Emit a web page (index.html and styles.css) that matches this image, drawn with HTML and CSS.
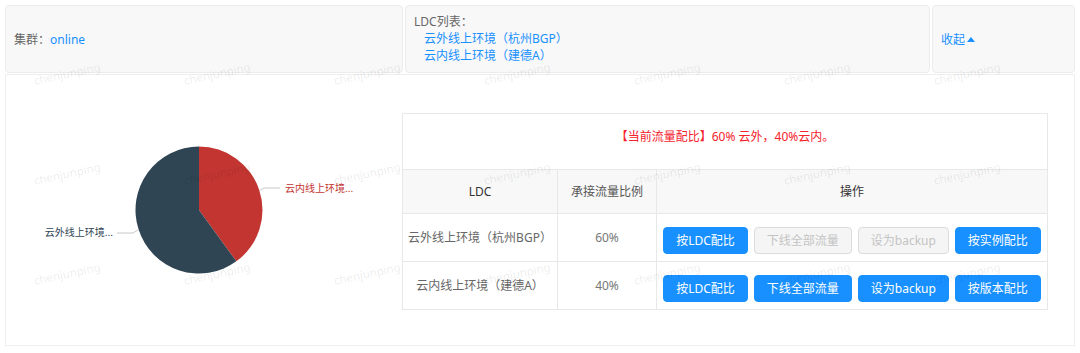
FILE: index.html
```html
<!DOCTYPE html>
<html lang="zh-CN">
<head>
<meta charset="utf-8">
<title>LDC</title>
<link rel="stylesheet" href="styles.css">
</head>
<body>
<div class="page">
  <div class="header">
    <div class="card card-cluster">
      <span class="label">集群：</span><a class="link">online</a>
    </div>
    <div class="card card-ldc">
      <div class="label">LDC列表：</div>
      <div class="ldc-links">
        <a class="link">云外线上环境（杭州BGP）</a>
        <a class="link">云内线上环境（建德A）</a>
      </div>
    </div>
    <div class="card card-toggle">
      <a class="link">收起<span class="tri"></span></a>
    </div>
  </div>

  <div class="panel">
    <div class="chart">
      <svg width="396" height="270" viewBox="0 0 396 270">
        <path d="M193,135 L193,71.5 A63.5,63.5 0 0 1 230.32,186.37 Z" fill="#c23531"/>
        <path d="M193,135 L230.32,186.37 A63.5,63.5 0 1 1 193,71.5 Z" fill="#2f4554"/>
        <polyline points="253.5,115.5 258,113 274,113" fill="none" stroke="#c8c8c8" stroke-width="1"/>
        <polyline points="132.6,154.6 127,158 111,158" fill="none" stroke="#c8c8c8" stroke-width="1"/>
        <text x="279" y="116.5" class="pie-label red">云内线上环境...</text>
        <text x="107" y="161" class="pie-label dark" text-anchor="end">云外线上环境...</text>
      </svg>
    </div>

    <table class="ratio">
      <colgroup>
        <col class="c1"><col class="c2"><col class="c3">
      </colgroup>
      <tr class="title-row">
        <td colspan="3">【当前流量配比】60% 云外，40%云内。</td>
      </tr>
      <tr class="head-row">
        <th class="th-ldc">LDC</th>
        <th class="th-ratio">承接流量比例</th>
        <th>操作</th>
      </tr>
      <tr class="body-row">
        <td>云外线上环境（杭州BGP）</td>
        <td class="pct">60%</td>
        <td>
          <div class="actions">
            <button class="btn">按LDC配比</button>
            <button class="btn disabled">下线全部流量</button>
            <button class="btn disabled">设为backup</button>
            <button class="btn">按实例配比</button>
          </div>
        </td>
      </tr>
      <tr class="body-row">
        <td>云内线上环境（建德A）</td>
        <td class="pct">40%</td>
        <td>
          <div class="actions">
            <button class="btn">按LDC配比</button>
            <button class="btn">下线全部流量</button>
            <button class="btn">设为backup</button>
            <button class="btn">按版本配比</button>
          </div>
        </td>
      </tr>
    </table>
  </div>

  <div class="watermark">
    <span>chenjunping</span><span>chenjunping</span><span>chenjunping</span><span>chenjunping</span><span>chenjunping</span><span>chenjunping</span><span>chenjunping</span>
    <span>chenjunping</span><span>chenjunping</span><span>chenjunping</span><span>chenjunping</span><span>chenjunping</span><span>chenjunping</span><span>chenjunping</span>
    <span>chenjunping</span><span>chenjunping</span><span>chenjunping</span><span>chenjunping</span><span>chenjunping</span><span>chenjunping</span><span>chenjunping</span>
  </div>
</div>
</body>
</html>
```

FILE: styles.css
```css
* { box-sizing: border-box; }

html, body {
  margin: 0;
  padding: 0;
  background: #fff;
}

body {
  font-family: "Noto Sans", "Noto Sans CJK SC", sans-serif;
  font-size: 12px;
  color: #666;
  width: 1080px;
  height: 353px;
  overflow: hidden;
}

.page {
  position: relative;
  padding: 5px 5px 0 5px;
  height: 353px;
  overflow: hidden;
}

.header {
  display: flex;
  gap: 2px;
  height: 68px;
}

.card {
  background: #f8f8f8;
  border: 1px solid #ececec;
  border-radius: 4px;
  padding: 0 8px;
  display: flex;
  align-items: center;
  line-height: 17px;
}

.card-cluster { width: 398px; }
.card-ldc {
  width: 525px;
  flex-direction: column;
  align-items: flex-start;
  justify-content: center;
  padding-bottom: 2px;
}
.card-toggle { flex: 1; }

.label { color: #666; }

.link {
  color: #1890ff;
  text-decoration: none;
}

.ldc-links {
  display: flex;
  flex-direction: column;
  padding-left: 10px;
}

.tri {
  display: inline-block;
  width: 0;
  height: 0;
  border-left: 4px solid transparent;
  border-right: 4px solid transparent;
  border-bottom: 5px solid #1890ff;
  margin-left: 2px;
  vertical-align: 2px;
}

.panel {
  margin-top: 1px;
  height: 272px;
  border: 1px solid #eee;
  background: #fff;
  display: flex;
  align-items: center;
}

.chart {
  width: 396px;
  height: 270px;
  flex: none;
}

.chart svg { display: block; }

.pie-label {
  font-family: "Noto Sans CJK SC", sans-serif;
  font-size: 10px;
}
.pie-label.red { fill: #c23531; }
.pie-label.dark { fill: #2f4554; }

.ratio {
  width: 645px;
  border-collapse: collapse;
  table-layout: fixed;
  border: 1px solid #e8e8e8;
  margin-top: 2px;
}

.ratio col.c1 { width: 155px; }
.ratio col.c2 { width: 99px; }
.ratio col.c3 { width: 391px; }

.ratio td, .ratio th {
  border: 1px solid #e8e8e8;
  text-align: center;
  vertical-align: middle;
  padding: 0;
  font-size: 12px;
  line-height: 17px;
}

.title-row td {
  height: 56px;
  color: #f5222d;
  padding-bottom: 10px;
  background: #fff;
}

.head-row th {
  height: 44px;
  background: #f8f8f8;
  font-weight: normal;
  color: #333;
}

.head-row .th-ratio { color: #555; }

.body-row td {
  height: 48px;
  color: #666;
}

.body-row td.pct { color: #777; }

.actions {
  display: flex;
  justify-content: center;
  gap: 6px;
  padding-top: 7px;
}

.btn {
  height: 27px;
  padding: 0 12px;
  font-family: "Noto Sans", "Noto Sans CJK SC", sans-serif;
  font-size: 12px;
  line-height: 25px;
  color: #fff;
  background: #1890ff;
  border: 1px solid #1890ff;
  border-radius: 4px;
  white-space: nowrap;
}

.btn.disabled {
  color: #c4c4c4;
  background: #f5f5f5;
  border-color: #dcdcdc;
}

.watermark {
  position: absolute;
  left: -8px;
  top: 23px;
  display: grid;
  grid-template-columns: repeat(7, 150px);
  grid-auto-rows: 100px;
  pointer-events: none;
  z-index: 5;
}

.watermark span {
  display: flex;
  align-items: center;
  justify-content: center;
  font-family: "Noto Sans", sans-serif;
  font-size: 11.5px;
  color: rgba(0, 0, 0, 0.09);
  transform: rotate(-12deg);
}
```
